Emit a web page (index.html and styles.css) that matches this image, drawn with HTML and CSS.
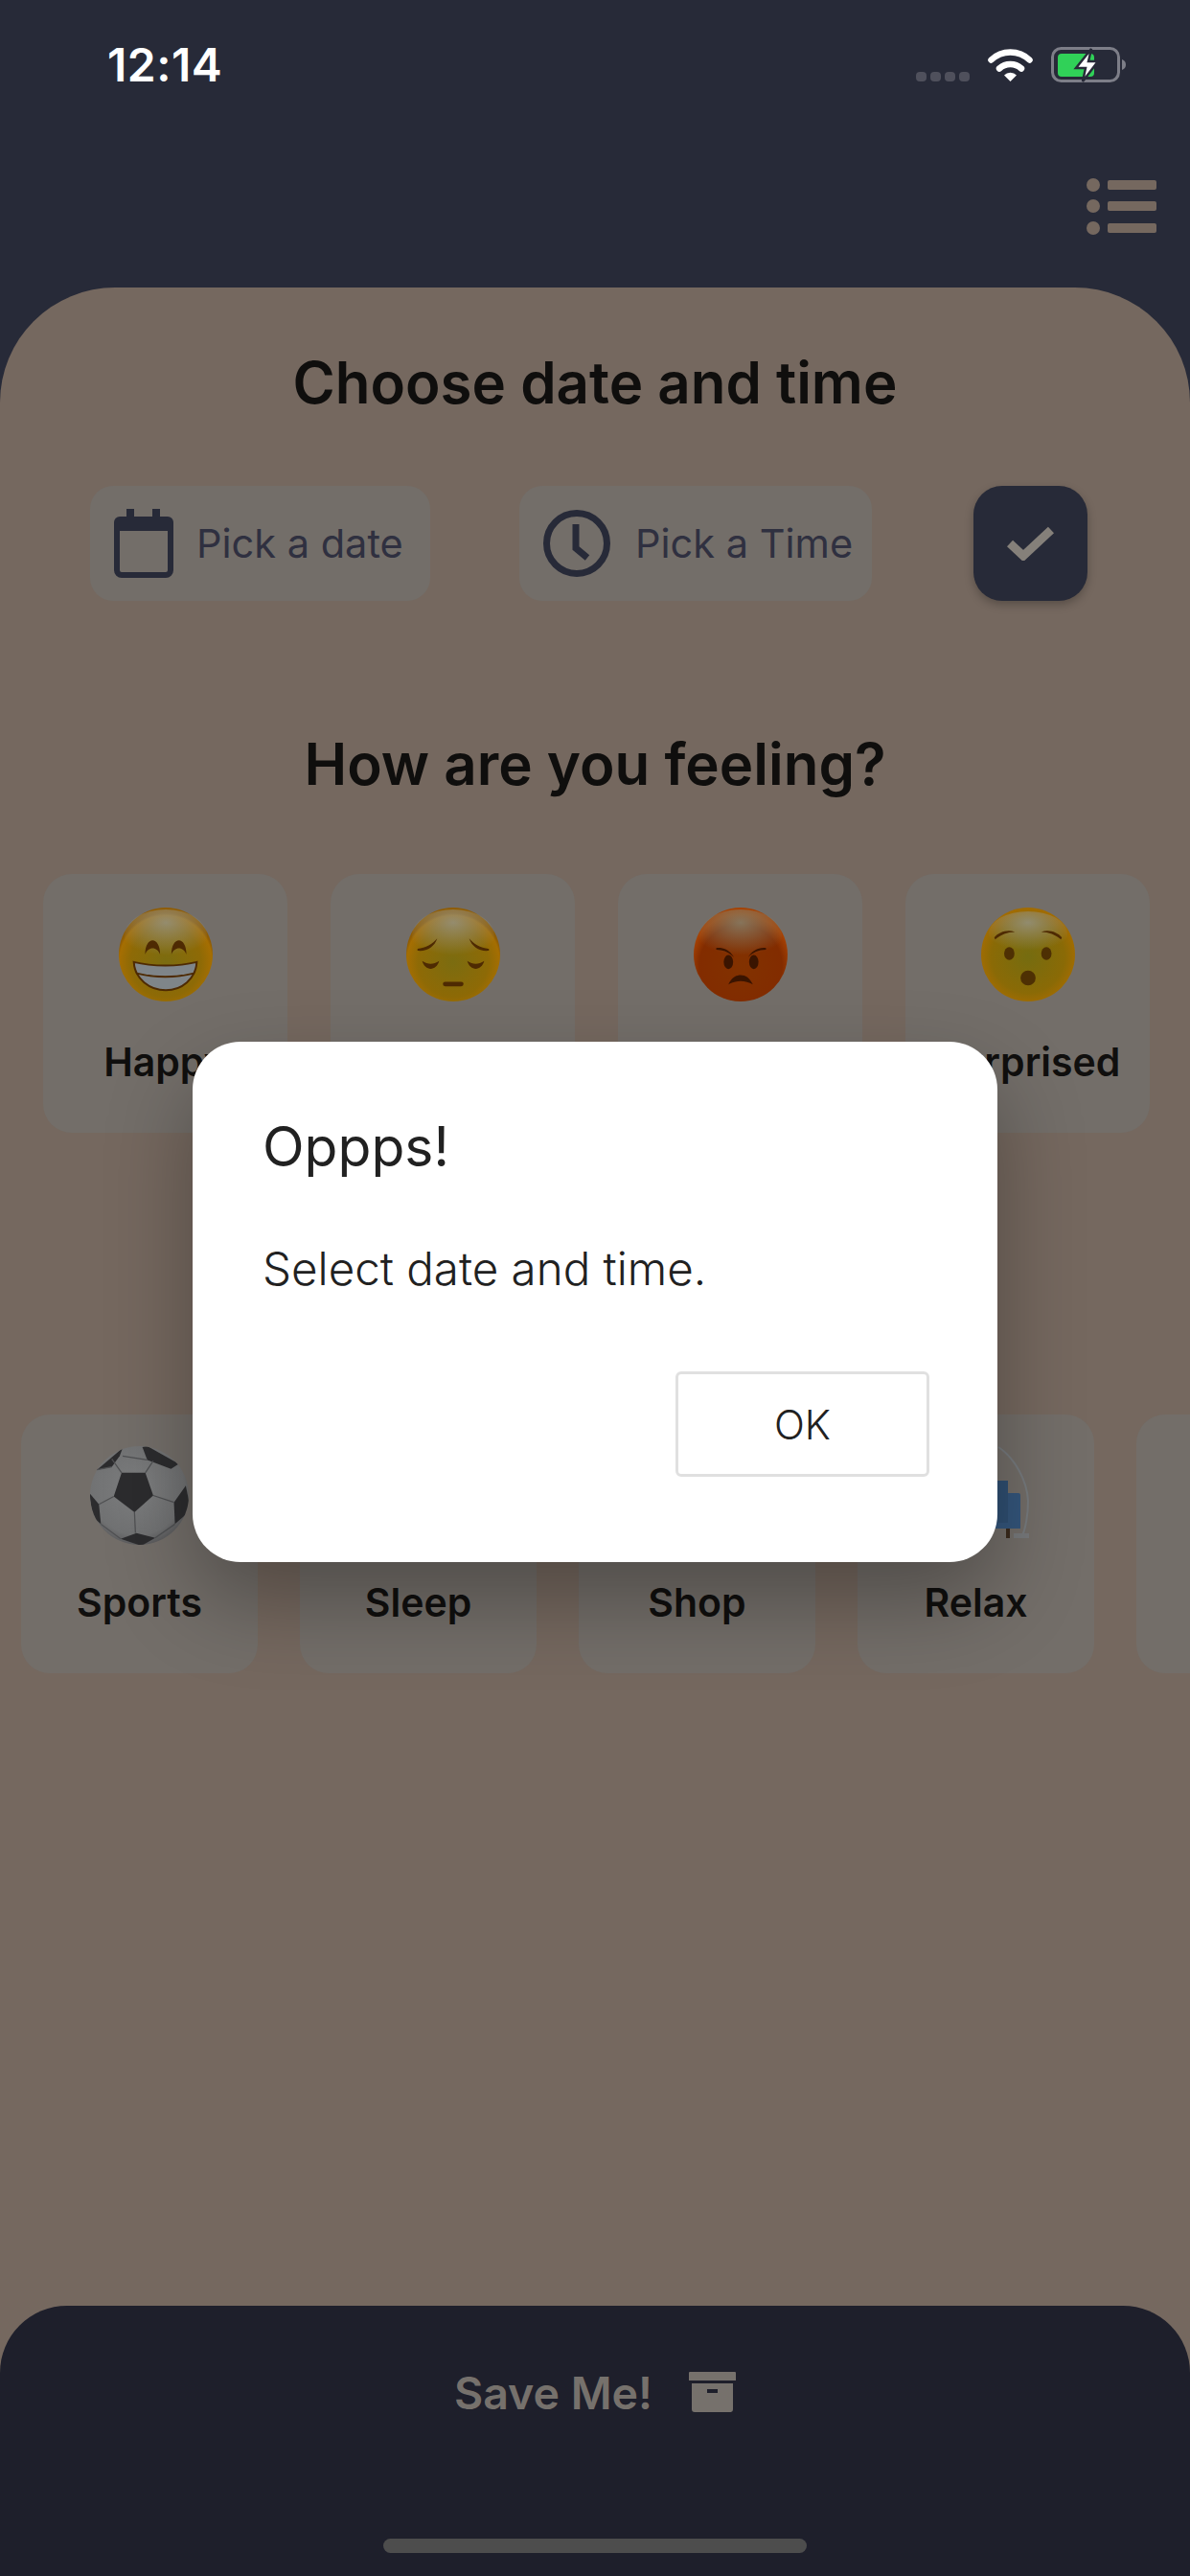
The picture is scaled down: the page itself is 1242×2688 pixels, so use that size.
FILE: index.html
```html
<!DOCTYPE html>
<html lang="en">
<head>
<meta charset="utf-8">
<title>Choose date and time</title>
<link rel="stylesheet" href="styles.css">
</head>
<body>
<div class="app">
  <header class="top">
    <div class="status">
      <span class="clock-time">12:14</span>
      <div class="status-icons">
        <div class="signal"><i></i><i></i><i></i><i></i></div>
        <svg class="wifi" viewBox="0 0 47 35"><path d="M3.5 12.5a29 29 0 0 1 40 0" fill="none" stroke="#fff" stroke-width="6.5" stroke-linecap="round"/><path d="M12 21.5a17 17 0 0 1 23 0" fill="none" stroke="#fff" stroke-width="6.5" stroke-linecap="round"/><path d="M23.5 35l-6.500-6.500a9 9 0 0 1 13 0z" fill="#fff"/></svg>
        <svg class="battery" viewBox="0 0 80 37"><rect x="1.500" y="1.500" width="69" height="34" rx="9" fill="none" stroke="#7d7e88" stroke-width="3"/><path d="M74 13c3 1 4 3 4 5.500s-1 4.500-4 5.500z" fill="#7d7e88"/><rect x="7" y="7" width="38" height="24" rx="4" fill="#30d158"/><path d="M42 2L26 22h10l-3 14 16-21H39z" fill="#fff" stroke="#272a38" stroke-width="2.500"/></svg>
      </div>
    </div>
    <svg class="menu" viewBox="0 0 73 65"><circle cx="7" cy="11" r="7"/><circle cx="7" cy="33" r="7"/><circle cx="7" cy="56" r="7"/><rect x="22" y="6" width="51" height="10" rx="2"/><rect x="22" y="28" width="51" height="10" rx="2"/><rect x="22" y="51" width="51" height="10" rx="2"/></svg>
  </header>

  <main class="sheet">
    <h2 class="heading heading-first">Choose date and time</h2>
    <div class="pickers">
      <button class="picker picker-date">
        <svg class="ico-cal" viewBox="0 0 62 72"><rect x="13" y="0" width="8" height="12"/><rect x="40" y="0" width="8" height="12"/><rect x="3" y="12" width="56" height="57" rx="5" fill="none" stroke="#272a38" stroke-width="6"/><path d="M0 14a6 6 0 0 1 6-6h50a6 6 0 0 1 6 6v9H0z"/></svg>
        <span>Pick a date</span>
      </button>
      <button class="picker picker-time">
        <svg class="ico-clock" viewBox="0 0 70 70"><circle cx="35" cy="35" r="31.500" fill="none" stroke="#272a38" stroke-width="7"/><path d="M34 15v25l12 10" fill="none" stroke="#272a38" stroke-width="7"/></svg>
        <span>Pick a Time</span>
      </button>
      <button class="confirm">
        <svg viewBox="0 0 49 36"><path d="M3 18l14 13L46 4" fill="none" stroke="#85807a" stroke-width="9"/></svg>
      </button>
    </div>

    <h2 class="heading heading-second">How are you feeling?</h2>
    <div class="tiles tiles-mood">
      <div class="tile">
        <svg class="emoji" viewBox="0 0 100 100">
          <defs>
            <radialGradient id="y1" cx="50%" cy="58%" r="52%"><stop offset="0" stop-color="#7b6c10"/><stop offset=".72" stop-color="#8e6a06"/><stop offset=".95" stop-color="#a56e02"/><stop offset="1" stop-color="#8f5c04"/></radialGradient>
            <radialGradient id="h1" cx="50%" cy="25%" r="62%"><stop offset="0" stop-color="#949488" stop-opacity=".8"/><stop offset="1" stop-color="#949488" stop-opacity="0"/></radialGradient>
          </defs>
          <circle cx="50" cy="50" r="50" fill="url(#y1)"/>
          <ellipse cx="50" cy="30" rx="44" ry="28" fill="url(#h1)"/>
          <path d="M28 50c0-20 16-20 16 0-3-9-13-9-16 0zM56 50c0-20 16-20 16 0-3-9-13-9-16 0z" fill="#4e2a02"/>
          <path d="M16 58c20 5 47 5 67 0-1 18-16 30-33 30S17 76 16 58z" fill="#7f8589" stroke="#4e2a02" stroke-width="2"/>
          <path d="M19 70c19 5 42 5 61 0" fill="none" stroke="#4e2a02" stroke-width="2"/>
        </svg>
        <span class="tile-label">Happy</span>
      </div>
      <div class="tile">
        <svg class="emoji" viewBox="0 0 100 100">
          <defs>
            <radialGradient id="y2" cx="50%" cy="58%" r="52%"><stop offset="0" stop-color="#7b6c10"/><stop offset=".72" stop-color="#8e6a06"/><stop offset=".95" stop-color="#a56e02"/><stop offset="1" stop-color="#8f5c04"/></radialGradient>
            <radialGradient id="h2" cx="50%" cy="25%" r="62%"><stop offset="0" stop-color="#949488" stop-opacity=".8"/><stop offset="1" stop-color="#949488" stop-opacity="0"/></radialGradient>
          </defs>
          <circle cx="50" cy="50" r="50" fill="url(#y2)"/>
          <ellipse cx="50" cy="30" rx="44" ry="28" fill="url(#h2)"/>
          <path d="M12 44c9-1 16-5 21-11-3 9-11 14-21 13zM88 44c-9-1-16-5-21-11 3 9 11 14 21 13z" fill="#4e2a02"/>
          <path d="M17 57c6 4 12 4 18 0-3 11-15 11-18 0zM83 57c-6 4-12 4-18 0 3 11 15 11 18 0z" fill="#4e2a02"/>
          <rect x="39" y="79" width="22" height="5" rx="2.500" fill="#4e2a02"/>
        </svg>
        <span class="tile-label">Sad</span>
      </div>
      <div class="tile">
        <svg class="emoji" viewBox="0 0 100 100">
          <defs>
            <radialGradient id="r3" cx="50%" cy="62%" r="55%"><stop offset="0" stop-color="#823200"/><stop offset=".8" stop-color="#822c00"/><stop offset="1" stop-color="#a54204"/></radialGradient>
            <radialGradient id="h3" cx="50%" cy="25%" r="62%"><stop offset="0" stop-color="#86806a" stop-opacity=".85"/><stop offset="1" stop-color="#86806a" stop-opacity="0"/></radialGradient>
          </defs>
          <circle cx="50" cy="50" r="50" fill="url(#r3)"/>
          <ellipse cx="50" cy="30" rx="44" ry="28" fill="url(#h3)"/>
          <path d="M24 43c8-1 15 3 19 10-5-5-11-8-19-8zM77 43c-8-1-15 3-19 10 5-5 11-8 19-8z" fill="#3a1400"/>
          <ellipse cx="37" cy="58" rx="5" ry="7.500" fill="#3a1400"/>
          <ellipse cx="64" cy="58" rx="5" ry="7.500" fill="#3a1400"/>
          <path d="M37 82c3-7 8-10 13-10s10 3 13 10c-8-5-18-5-26 0z" fill="#3a1400"/>
        </svg>
        <span class="tile-label">Angry</span>
      </div>
      <div class="tile">
        <svg class="emoji" viewBox="0 0 100 100">
          <defs>
            <radialGradient id="y4" cx="50%" cy="52%" r="54%"><stop offset="0" stop-color="#756c10"/><stop offset=".72" stop-color="#8a6a06"/><stop offset=".95" stop-color="#a26c02"/><stop offset="1" stop-color="#8f5c04"/></radialGradient>
            <radialGradient id="h4" cx="50%" cy="25%" r="62%"><stop offset="0" stop-color="#949488" stop-opacity=".8"/><stop offset="1" stop-color="#949488" stop-opacity="0"/></radialGradient>
          </defs>
          <circle cx="50" cy="50" r="50" fill="url(#y4)"/>
          <ellipse cx="50" cy="28" rx="42" ry="24" fill="url(#h4)"/>
          <path d="M14 32c5-6 14-9 22-6-8 0-15 3-21 8zM86 32c-5-6-14-9-22-6 8 0 15 3 21 8z" fill="#4e2a02"/>
          <ellipse cx="30" cy="49" rx="5.500" ry="6.800" fill="#4e3003"/>
          <ellipse cx="69.500" cy="49" rx="5.500" ry="6.800" fill="#4e3003"/>
          <circle cx="50" cy="75" r="8" fill="#4e3003"/>
        </svg>
        <span class="tile-label">Surprised</span>
      </div>
    </div>

    <div class="tiles tiles-activity">
      <div class="tile">
        <svg class="ball" viewBox="0 0 100 100">
          <defs>
            <radialGradient id="b1" cx="48%" cy="42%" r="60%"><stop offset="0" stop-color="#7e7f80"/><stop offset=".8" stop-color="#717273"/><stop offset="1" stop-color="#58585a"/></radialGradient>
            <clipPath id="bc"><circle cx="50" cy="50" r="50"/></clipPath>
          </defs>
          <circle cx="50" cy="50" r="50" fill="url(#b1)"/>
          <g clip-path="url(#bc)" fill="#2c2c2e">
            <path d="M32 27h24l8 23-19 17-21-16z"/>
            <path d="M58 0l32 18-8 5-24-9-5-13z"/>
            <path d="M7 24L33 2l-3 8-8 11z"/>
            <path d="M97 40l5 25-16 14-1-22z"/>
            <path d="M-1 47l10 12 2 20-8-7z"/>
            <path d="M31 94l16-6 19 5-14 8z"/>
          </g>
          <g fill="none" stroke="#4f5052" stroke-width="1.200">
            <path d="M32 27L22 13M56 27l8-12M64 50l21 7M24 51L9 59M45 67l1 21M11 79l20 15M66 93l20-14M33 10l25 4M22 21L7 24"/>
          </g>
        </svg>
        <span class="tile-label">Sports</span>
      </div>
      <div class="tile">
        <div class="icon-slot"></div>
        <span class="tile-label">Sleep</span>
      </div>
      <div class="tile">
        <div class="icon-slot"></div>
        <span class="tile-label">Shop</span>
      </div>
      <div class="tile">
        <svg class="lamp" viewBox="0 0 110 103">
          <path d="M78 1c18 12 30 36 31 56 0 16-3 30-6 36" fill="none" stroke="#777b7e" stroke-width="2"/>
          <path d="M60 36h28v44H60z" fill="#2f4f72"/>
          <path d="M88 49h11a2 2 0 0 1 2 2v35H60v-6h28z" fill="#34567c"/>
          <rect x="86" y="86" width="4" height="10" fill="#3a2a1c"/>
          <rect x="94" y="91" width="17" height="5" fill="#77797b"/>
        </svg>
        <span class="tile-label">Relax</span>
      </div>
      <div class="tile"></div>
    </div>

    <footer class="savebar">
      <span class="save-label">Save Me!</span>
      <svg class="ico-archive" viewBox="0 0 49 42"><path d="M1 0h47a1 1 0 0 1 1 1v8H0V1a1 1 0 0 1 1-1z"/><path fill-rule="evenodd" d="M3 12h43v27a3 3 0 0 1-3 3H6a3 3 0 0 1-3-3zM19 18v4h11v-4z"/></svg>
      <div class="home-bar"></div>
    </footer>
  </main>

  <div class="dialog" role="alertdialog">
    <h3 class="dialog-title">Oppps!</h3>
    <p class="dialog-text">Select date and time.</p>
    <div class="dialog-actions"><button class="dialog-ok">OK</button></div>
  </div>
</div>
</body>
</html>
```
FILE: styles.css
```css
* { box-sizing: border-box; }
html, body { margin: 0; padding: 0; }
body { width: 1242px; height: 2688px; overflow: hidden; font-family: "Inter", "Liberation Sans", sans-serif; }
button { font-family: inherit; border: 0; padding: 0; margin: 0; }
h2, h3, p { margin: 0; font-weight: inherit; }

.app { position: relative; width: 1242px; height: 2688px; background: #272a38; display: flex; flex-direction: column; overflow: hidden; }

.top { height: 300px; flex: none; display: flex; flex-direction: column; padding: 49px 35px 0 112px; }
.status { display: flex; justify-content: space-between; align-items: flex-start; height: 40px; padding-right: 30px; }
.clock-time { font-weight: 600; font-size: 48px; line-height: 37px; letter-spacing: .5px; color: #fff; }
.status-icons { display: flex; align-items: flex-start; }
.signal { display: flex; gap: 4px; margin-top: 26px; margin-right: 19px; }
.signal i { width: 11px; height: 10px; border-radius: 4px; background: #4f505c; }
.wifi { width: 47px; height: 35px; margin-top: 1px; margin-right: 19px; }
.battery { width: 80px; height: 37px; }
.menu { width: 73px; height: 65px; fill: #75685f; margin-top: 93px; align-self: flex-end; }

.sheet { flex: 1; background: #75685f; border-radius: 120px 120px 0 0; display: flex; flex-direction: column; min-height: 0; }

.heading { height: 70px; font-size: 60px; line-height: 70px; font-weight: 600; text-align: center; color: #0f0e0d; }
.heading-first { margin-top: 64px; }
.heading-second { margin-top: 135px; }

.pickers { display: flex; margin-top: 73px; padding-left: 94px; }
.picker { height: 120px; border-radius: 24px; background: #736e69; display: flex; align-items: center; color: #2f3040; font-size: 41.500px; }
.picker-date { width: 355px; padding-left: 25px; gap: 24px; }
.picker-time { width: 368px; margin-left: 93px; padding-left: 25px; gap: 26px; }
.ico-cal { width: 62px; height: 72px; fill: #272a38; flex: none; }
.ico-clock { width: 70px; height: 70px; flex: none; }
.confirm { width: 119px; height: 120px; margin-left: 106px; border-radius: 30px; background: #272a38; display: flex; align-items: center; justify-content: center; box-shadow: 0 4px 10px rgba(0,0,0,.25); }
.confirm svg { width: 49px; height: 36px; }

.tiles { display: flex; overflow: visible; }
.tile { flex: none; height: 270px; border-radius: 30px; background: #736e69; display: flex; flex-direction: column; align-items: center; }
.tile-label { height: 50px; line-height: 50px; font-size: 41px; font-weight: 600; color: #100f0e; white-space: nowrap; }

.tiles-mood { margin-top: 80px; padding-left: 45px; gap: 45px; }
.tiles-mood .tile { width: 255px; padding-top: 35px; }
.tiles-mood .tile-label { margin-top: 38px; }
.emoji { width: 98px; height: 98px; }

.tiles-activity { margin-top: 294px; padding-left: 22px; gap: 44px; }
.tiles-activity .tile { width: 247px; padding-top: 33px; }
.tiles-activity .tile-label { margin-top: 35px; }
.ball { width: 103px; height: 103px; }
.icon-slot { width: 103px; height: 103px; }
.lamp { width: 110px; height: 103px; }

.savebar { margin-top: auto; height: 282px; background: #1e1f2b; border-radius: 70px 70px 0 0; display: flex; justify-content: center; align-items: flex-start; padding-top: 65px; position: relative; gap: 38px; }
.save-label { font-size: 46.500px; line-height: 52px; font-weight: 600; color: #76716c; }
.ico-archive { width: 49px; height: 42px; fill: #76716c; margin-top: 4px; }
.home-bar { position: absolute; left: 400px; top: 243px; width: 442px; height: 15px; border-radius: 8px; background: #4d4d4d; }

.dialog { position: absolute; left: 201px; top: 1087px; width: 840px; height: 543px; background: #fff; border-radius: 50px; box-shadow: 0 40px 90px rgba(0,0,0,.3); padding: 75px 71px 0 73px; color: #212121; display: flex; flex-direction: column; }
.dialog-title { font-size: 57px; line-height: 70px; font-weight: 400; }
.dialog-text { margin-top: 64px; font-size: 47.500px; line-height: 56px; font-weight: 300; }
.dialog-actions { display: flex; justify-content: flex-end; margin-top: 79px; }
.dialog-ok { width: 265px; height: 110px; background: #fff; border: 3px solid #e0e0e0; border-radius: 6px; font-size: 42px; font-weight: 300; color: #212121; }
```
